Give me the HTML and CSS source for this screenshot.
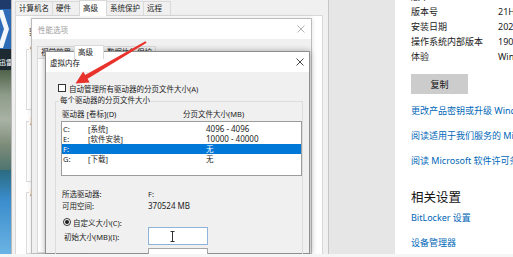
FILE: index.html
```html
<!DOCTYPE html>
<html lang="zh-CN">
<head>
<meta charset="utf-8">
<title>虚拟内存</title>
<link rel="stylesheet" href="styles.css">
</head>
<body>
<div class="screen">

  <div class="wallpaper">
    <svg viewBox="0 0 11 254" width="11" height="254">
      <defs>
        <linearGradient id="rock" x1="0" y1="0" x2="0" y2="1">
          <stop offset="0" stop-color="#4f6249"/>
          <stop offset="0.25" stop-color="#8e9b8a"/>
          <stop offset="0.5" stop-color="#a9b2a5"/>
          <stop offset="0.75" stop-color="#7d8c79"/>
          <stop offset="1" stop-color="#4f7470"/>
        </linearGradient>
        <linearGradient id="water" x1="0" y1="0" x2="0" y2="1">
          <stop offset="0" stop-color="#2b6b80"/>
          <stop offset="0.35" stop-color="#3a8ccb"/>
          <stop offset="1" stop-color="#6ab3e4"/>
        </linearGradient>
      </defs>
      <rect x="0" y="0" width="11" height="9" fill="#1e3b6b"/>
      <rect x="0" y="9" width="11" height="40" fill="#2f6cb7"/>
      <polygon points="0,10 3,10 9,29 3,48 0,48 0,41 4,29 0,17" fill="#f3f6fa"/>
      <rect x="0" y="49" width="11" height="21" fill="#1d2a31"/>
      <text x="-1" y="65" font-size="7" fill="#ffffff" font-family="Noto Sans CJK SC, sans-serif">迅雷</text>
      <rect x="0" y="70" width="11" height="100" fill="url(#rock)"/>
      <rect x="0" y="170" width="11" height="84" fill="url(#water)"/>
    </svg>
  </div>

  <div class="settings">
    <div class="info first"><span>版本</span><span>Windows 10 专业版</span></div>
    <div class="info"><span>版本号</span><span>21H2</span></div>
    <div class="info"><span>安装日期</span><span>2021/10/18</span></div>
    <div class="info"><span>操作系统内部版本</span><span>19044.1288</span></div>
    <div class="info"><span>体验</span><span>Windows Feature Experience Pack</span></div>
    <div class="copy">复制</div>
    <a class="link l1">更改产品密钥或升级 Windows</a>
    <a class="link">阅读适用于我们服务的 Microsoft 服务协议</a>
    <a class="link">阅读 Microsoft 软件许可条款</a>
    <div class="heading">相关设置</div>
    <a class="link l5">BitLocker 设置</a>
    <a class="link">设备管理器</a>
  </div>

  <div class="sysprops">
    <div class="tabs sys">
      <span class="tab">计算机名</span>
      <span class="tab">硬件</span>
      <span class="tab sel">高级</span>
      <span class="tab">系统保护</span>
      <span class="tab">远程</span>
    </div>
    <div class="sys-page">
      <p class="note">要进行大多数更改，你必须作为管理员登录。</p>
      <div class="sp-group g1"><div class="sp-title">性能</div></div>
      <div class="sp-group g2"><div class="sp-title">用户配置文件</div></div>
      <div class="sp-group g3"><div class="sp-title">启动和故障恢复</div></div>
    </div>
  </div>

  <div class="perf">
    <div class="titlebar inactive">
      <span>性能选项</span>
      <svg class="close" viewBox="0 0 8 8" width="8" height="8"><path d="M0.5 0.5L7.5 7.5M7.5 0.5L0.5 7.5"/></svg>
    </div>
    <div class="perf-body">
      <div class="tabs perf-tabs">
        <span class="tab">视觉效果</span>
        <span class="tab sel">高级</span>
        <span class="tab">数据执行保护</span>
      </div>
      <div class="perf-page"></div>
    </div>
  </div>

  <div class="vm">
    <div class="titlebar vm-title">
      <span>虚拟内存</span>
      <svg class="close" viewBox="0 0 8 8" width="8" height="8"><path d="M0.5 0.5L7.5 7.5M7.5 0.5L0.5 7.5"/></svg>
    </div>
    <div class="vm-body">
      <div class="check"><span class="box"></span><span>自动管理所有驱动器的分页文件大小(A)</span></div>
      <div class="group">
        <div class="gtitle">每个驱动器的分页文件大小</div>
        <div class="cols"><span>驱动器 [卷标](D)</span><span>分页文件大小(MB)</span></div>
        <div class="list">
          <div class="row"><span>C:</span><span>[系统]</span><span class="num">4096 - 4096</span></div>
          <div class="row"><span>E:</span><span>[软件安装]</span><span class="num">10000 - 40000</span></div>
          <div class="row sel"><span>F:</span><span></span><span>无</span></div>
          <div class="row"><span>G:</span><span>[下载]</span><span>无</span></div>
        </div>
        <div class="kv k1"><span>所选驱动器:</span><span>F:</span></div>
        <div class="kv"><span>可用空间:</span><span class="num">370524 MB</span></div>
        <div class="radio"><span class="rb"></span><span>自定义大小(C):</span></div>
        <div class="field"><span>初始大小(MB)(I):</span>
          <span class="input focus">
            <svg class="beam" viewBox="0 0 5 11" width="5" height="11"><path d="M0.5 0.5H4.5M2.5 0.5V10.5M0.5 10.5H4.5"/></svg>
          </span>
        </div>
        <div class="field f2"><span>最大值(MB)(X):</span><span class="input"></span></div>
      </div>
    </div>
  </div>

  <svg class="arrow" viewBox="0 0 513 254" width="513" height="254">
    <polygon points="145.4,41.2 146.6,42.8 87.6,78.8 89.6,82.4 75.5,83.5 83.2,71.4 85.2,75"/>
  </svg>
</div>
</body>
</html>
```

FILE: styles.css
```css
* { box-sizing: border-box; }

html, body {
  margin: 0;
  padding: 0;
}

body {
  width: 513px;
  height: 257px;
  overflow: hidden;
  background: #f5f5f5;
  font-family: "Noto Sans", "Noto Sans CJK SC", sans-serif;
  font-size: 7.5px;
  color: #1c1c1c;
}

.screen {
  position: relative;
  height: 254px;
  overflow: hidden;
  background: #e6e6e6;
}

/* desktop wallpaper strip */
.wallpaper {
  position: absolute;
  left: 0;
  top: 0;
  width: 11px;
  height: 254px;
  overflow: hidden;
}
.wallpaper svg { display: block; }

/* settings window (right) */
.settings {
  position: absolute;
  left: 395px;
  top: 0;
  width: 118px;
  height: 254px;
  background: #fff;
  padding-left: 16px;
  font-size: 9px;
  color: #1a1a1a;
  white-space: nowrap;
  overflow: hidden;
}
.info {
  display: grid;
  grid-template-columns: 87px auto;
  line-height: 15px;
}
.info.first { margin-top: -11px; }
.copy {
  margin-top: 10px;
  width: 57px;
  height: 20px;
  background: #cccccc;
  display: grid;
  place-items: center;
  color: #111;
}
.link {
  display: block;
  color: #0067b8;
  line-height: 12px;
  margin-top: 13px;
}
.link.l1 { margin-top: 11px; }
.link.l5 { margin-top: 5px; }
.heading {
  font-size: 12.5px;
  line-height: 18px;
  margin-top: 22px;
  color: #111;
}

/* system properties window */
.sysprops {
  position: absolute;
  left: 11px;
  top: 0;
  width: 318px;
  height: 254px;
  background: #f0f0f0;
  border-left: 1px solid #b9b9b9;
  border-right: 1px solid #c6c6c6;
  padding: 0 5px 0 3px;
  display: flex;
  flex-direction: column;
}
.tabs {
  display: flex;
  align-items: flex-end;
  white-space: nowrap;
}
.tab {
  min-width: 28px;
  padding: 0 3px;
  border: 1px solid #d9d9d9;
  border-bottom: none;
  margin-right: -1px;
  background: #f0f0f0;
  color: #222;
}
.tab.sel {
  background: #fff;
  position: relative;
  z-index: 1;
  margin-bottom: -1px;
}
.tabs.sys { height: 15px; }
.tabs.sys .tab { height: 14px; line-height: 13px; }
.tabs.sys .tab.sel { height: 16px; line-height: 14px; }

.sys-page {
  flex: 1;
  background: #fff;
  border: 1px solid #d9d9d9;
  padding: 11px 0 0 10px;
}
.note {
  margin: 0 0 0 3px;
  line-height: 10px;
  white-space: nowrap;
}
.sp-group {
  border: 1px solid #dcdcdc;
  width: 270px;
}
.sp-group.g1 { margin-top: 12px; height: 61px; }
.sp-group.g2 { margin-top: 11px; height: 61px; }
.sp-group.g3 { margin-top: 10px; height: 62px; }
.sp-title {
  margin: -6px 0 0 2px;
  padding: 0 1px;
  width: max-content;
  background: #fff;
  line-height: 10px;
}

/* title bars */
.titlebar {
  height: 20px;
  background: #fff;
  display: flex;
  align-items: center;
  justify-content: space-between;
  flex: none;
}
.titlebar.inactive { color: #9c9c9c; padding: 0 6px; }
.titlebar.inactive .close path { stroke: #a8a8a8; }
.close path {
  stroke: #333;
  stroke-width: 0.9;
  fill: none;
}
.close { display: block; }

/* performance options window */
.perf {
  position: absolute;
  left: 31px;
  top: 18px;
  width: 281px;
  height: 236px;
  background: #f0f0f0;
  border: 1px solid #bcbcbc;
  box-shadow: 0 0 5px rgba(0, 0, 0, 0.12);
  display: flex;
  flex-direction: column;
}
.perf-body {
  flex: 1;
  padding: 5px 3px 0 5px;
  display: flex;
  flex-direction: column;
}
.tabs.perf-tabs { height: 14px; }
.perf-tabs .tab { height: 12px; line-height: 11px; min-width: 30px; }
.perf-tabs .tab.sel { height: 14px; line-height: 12px; }
.perf-page {
  flex: 1;
  background: #fff;
  border: 1px solid #d9d9d9;
}

/* virtual memory dialog */
.vm {
  position: absolute;
  left: 45px;
  top: 51px;
  width: 265px;
  height: 203px;
  background: #f0f0f0;
  border: 1px solid #8e8e8e;
  box-shadow: 0 0 6px rgba(0, 0, 0, 0.32);
  display: flex;
  flex-direction: column;
}
.vm-title {
  padding: 0 5px 0 4px;
  color: #111;
}
.vm-body {
  flex: 1;
  padding: 11px 6px 0 9px;
  white-space: nowrap;
}
.check {
  display: flex;
  align-items: center;
  gap: 3px;
  height: 10px;
  margin-left: 3px;
}
.box {
  width: 8px;
  height: 8px;
  border: 1px solid #333;
  background: #fff;
  flex: none;
}
.group {
  margin-top: 8px;
  border: 1px solid #dcdcdc;
  height: 170px;
  padding-left: 5px;
}
.gtitle {
  margin: -7px 0 0 -2px;
  padding: 0 1px;
  width: max-content;
  background: #f0f0f0;
  line-height: 10px;
}
.cols {
  display: grid;
  grid-template-columns: 121px auto;
  margin-top: 4px;
  line-height: 10px;
  padding-left: 1px;
}
.list {
  margin-top: 2px;
  height: 55px;
  border: 1px solid #9c9c9c;
  background: #fff;
  padding-top: 2px;
}
.row {
  display: grid;
  grid-template-columns: 25px 118px auto;
  height: 10px;
  line-height: 10px;
  padding-left: 1px;
}
.row.sel {
  background: #0078d7;
  color: #fff;
}
.num { font-size: 8px; }
.kv {
  display: grid;
  grid-template-columns: 86px auto;
  line-height: 12px;
  padding-left: 1px;
}
.kv.k1 { margin-top: 12px; }
.radio {
  display: flex;
  align-items: center;
  gap: 2px;
  height: 10px;
  margin-top: 5px;
  padding-left: 2px;
}
.rb {
  width: 8px;
  height: 8px;
  border: 1px solid #333;
  border-radius: 50%;
  background: #fff;
  display: grid;
  place-items: center;
  flex: none;
}
.rb::after {
  content: "";
  width: 4px;
  height: 4px;
  border-radius: 50%;
  background: #1a1a1a;
}
.field {
  display: grid;
  grid-template-columns: 84px 60px;
  align-items: center;
  padding-left: 3px;
}
.field.f2 { margin-top: 3px; }
.input {
  height: 18px;
  border: 1px solid #a6a6a6;
  background: #fff;
  display: flex;
  align-items: center;
  padding-left: 21px;
}
.input.focus { border-color: #8fb3d9; }
.beam path {
  stroke: #333;
  stroke-width: 1;
  fill: none;
}
.beam { display: block; }

/* red annotation arrow */
.arrow {
  position: absolute;
  left: 0;
  top: 0;
  pointer-events: none;
}
.arrow polygon { fill: #e8322b; }
```
